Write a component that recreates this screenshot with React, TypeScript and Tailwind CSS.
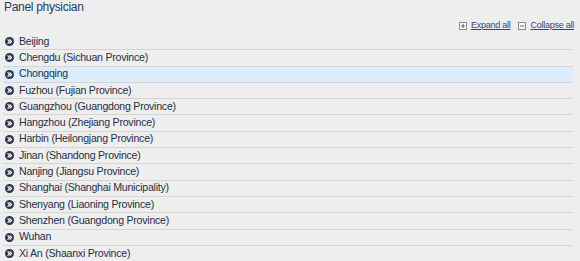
import { Plus, Minus } from 'lucide-react';

const cities = [
  'Beijing',
  'Chengdu (Sichuan Province)',
  'Chongqing',
  'Fuzhou (Fujian Province)',
  'Guangzhou (Guangdong Province)',
  'Hangzhou (Zhejiang Province)',
  'Harbin (Heilongjang Province)',
  'Jinan (Shandong Province)',
  'Nanjing (Jiangsu Province)',
  'Shanghai (Shanghai Municipality)',
  'Shenyang (Liaoning Province)',
  'Shenzhen (Guangdong Province)',
  'Wuhan',
  'Xi An (Shaanxi Province)',
];

function Bullet() {
  return (
    <svg width="9" height="9" viewBox="0 0 9 9" className="shrink-0">
      <circle cx="4.5" cy="4.5" r="4.5" fill="#2b3550" />
      <path d="M2.6 2.4 L4.6 4.5 L2.6 6.6 M4.6 2.4 L6.6 4.5 L4.6 6.6" stroke="#fff" strokeWidth="1.1" fill="none" />
    </svg>
  );
}

export default function App() {
  return (
    <div className="w-[580px] h-[261px] overflow-hidden bg-[#eeeeee] font-['Liberation_Sans',Arial,sans-serif]">
      <h1 className="pl-[4px] text-[12px] tracking-[-0.3px] leading-[14px] text-[#1c3b70]">Panel physician</h1>

      {/* Toolbar */}
      <div className="flex justify-end items-center gap-[8px] pr-[6px] mt-[6px] h-[12px] text-[9px] tracking-[-0.25px] text-[#2d4a82]">
        <button className="flex items-center gap-[4px]">
          <span className="w-[8px] h-[8px] border border-[#8a8a8a] bg-white flex items-center justify-center">
            <Plus className="w-[6px] h-[6px] text-[#333]" strokeWidth={3} />
          </span>
          <span className="underline">Expand all</span>
        </button>
        <button className="flex items-center gap-[4px]">
          <span className="w-[8px] h-[8px] border border-[#8a8a8a] bg-white flex items-center justify-center">
            <Minus className="w-[6px] h-[6px] text-[#333]" strokeWidth={3} />
          </span>
          <span className="underline">Collapse all</span>
        </button>
      </div>

      {/* List */}
      <ul className="ml-[3px] mr-[7px] mt-[2px]">
        {cities.map((c, i) => (
          <li
            key={c}
            className={
              'flex items-center gap-[5px] pl-[2px] h-[16.3px] border-b border-[#d4d4d4] text-[10.6px] tracking-[-0.25px] text-[#262f45] ' +
              (i === 2 ? 'bg-[#dcedfd] border-[#c9d7e6]' : '')
            }
          >
            <Bullet />
            <span>{c}</span>
          </li>
        ))}
      </ul>
    </div>
  );
}
